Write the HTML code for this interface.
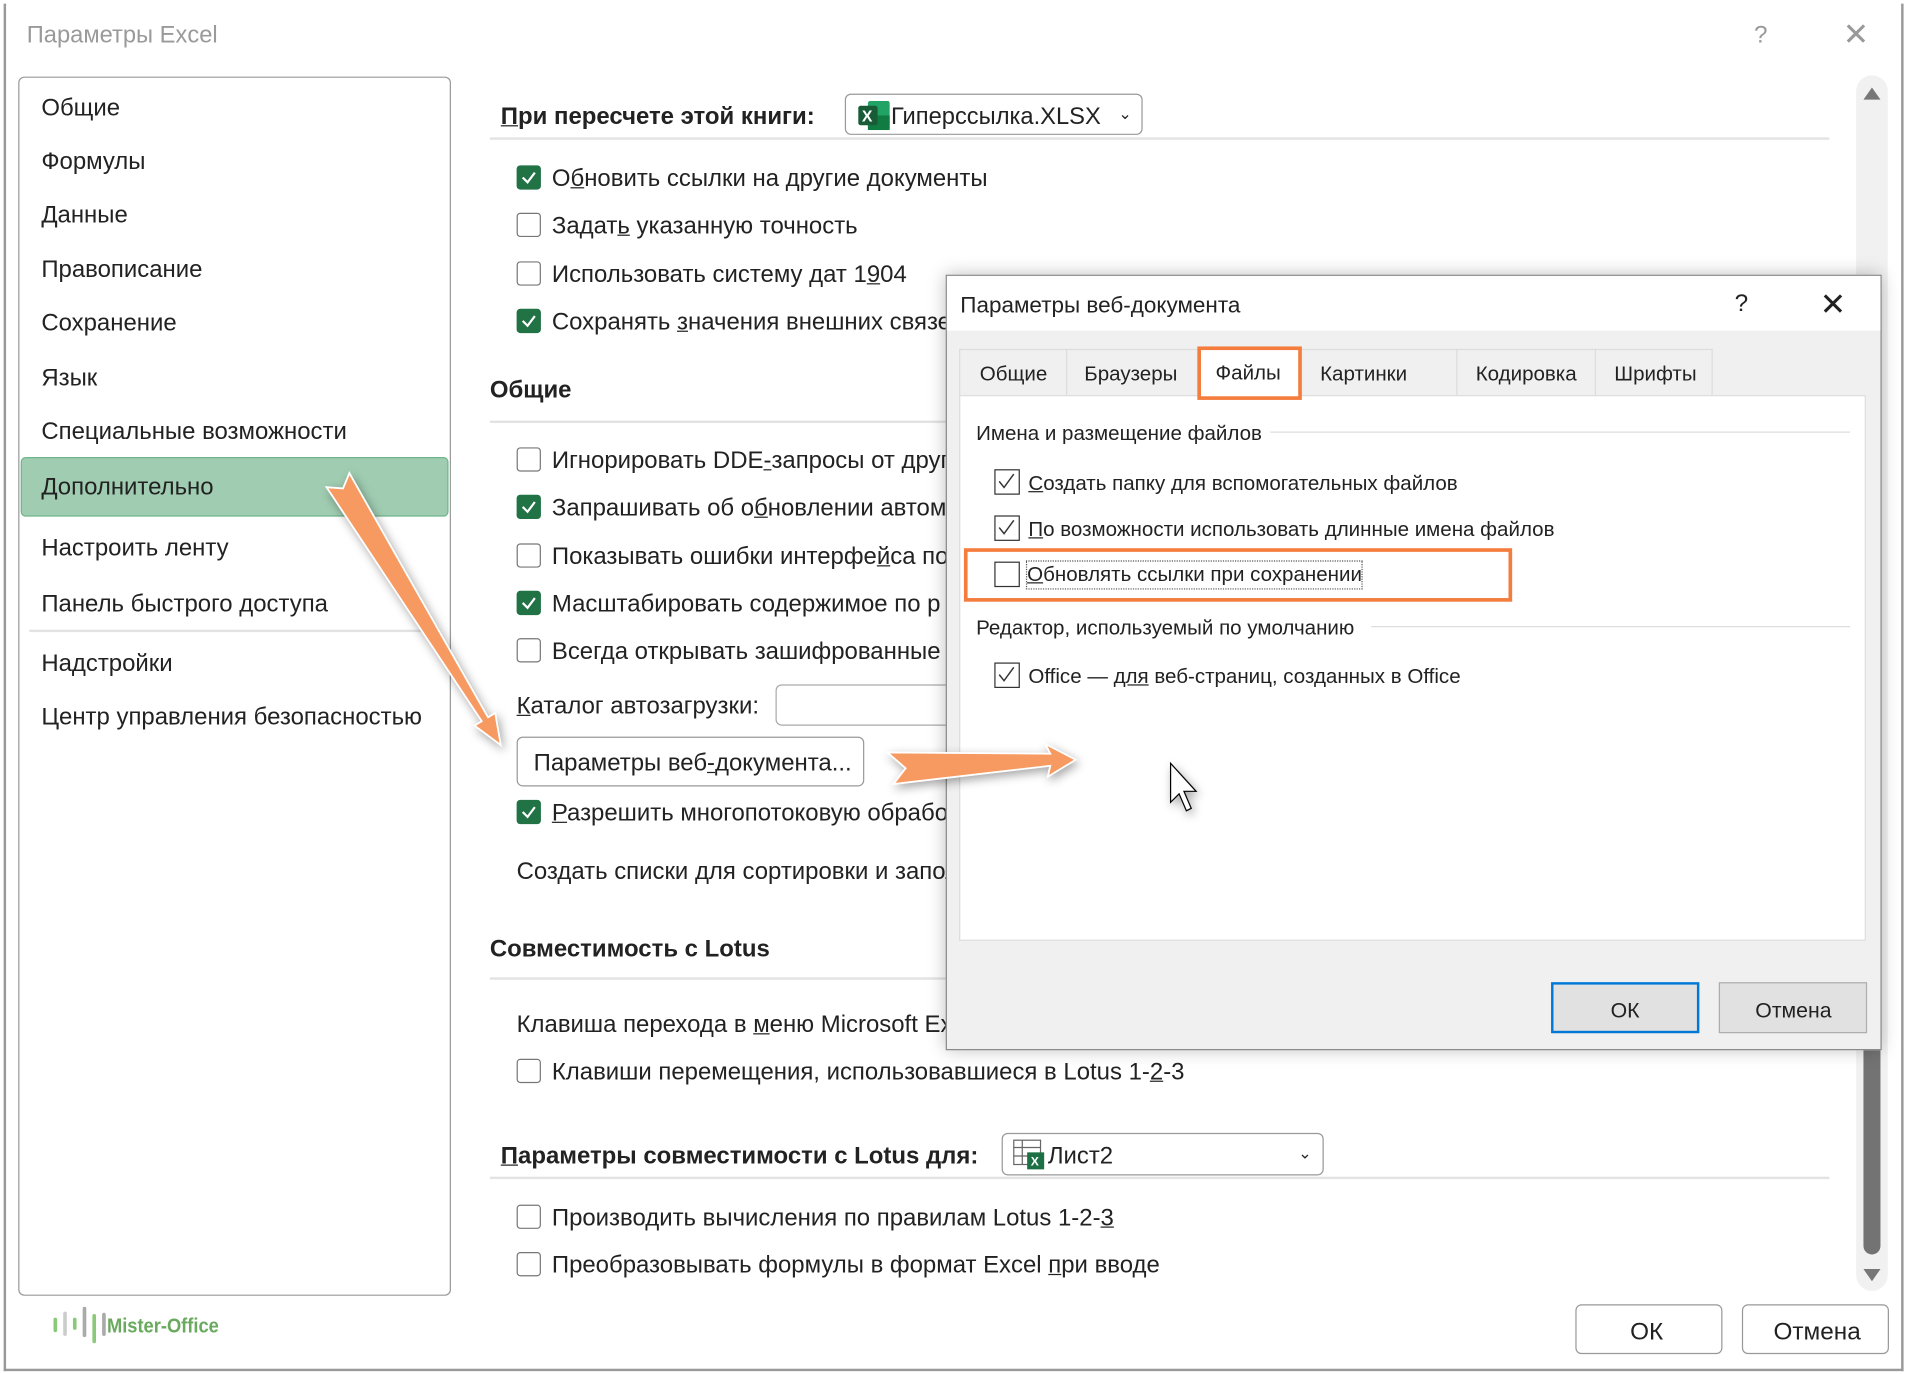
<!DOCTYPE html>
<html><head><meta charset="utf-8"><style>
*{box-sizing:border-box;margin:0;padding:0}
html,body{width:1906px;height:1374px;overflow:hidden;background:#fff}
#s{position:absolute;left:0;top:0;width:1568px;height:1130px;transform:scale(1.21556);transform-origin:0 0;font-family:"Liberation Sans",sans-serif;color:#222;font-size:19.7px}
.a{position:absolute;white-space:nowrap}
.t{position:absolute;white-space:nowrap;line-height:22px;transform:translateY(-10px)}
.d{font-size:16.9px}
.cb{position:absolute;width:20px;height:20px;border:1.5px solid #777;border-radius:3px;background:#fff}
.cg{position:absolute;width:20px;height:20px;border-radius:3px;background:#217346}
.cg svg,.dc svg{position:absolute;left:0;top:0}
.dc{position:absolute;width:21px;height:21px;border:1.5px solid #333;background:#fff}
.b{font-weight:bold}
.line{position:absolute;height:2px;background:#e3e3e3}
u{text-decoration:underline}
.btn{position:absolute;border:1.5px solid #999;border-radius:5px;background:#fff;text-align:center}
</style></head><body><div id="s">
<div class="a" style="left:3px;top:3px;width:1563px;height:1125px;border:2px solid #999;border-top:none"></div>
<div class="t" style="left:22px;top:28px;color:#9a9a9a;font-size:19.5px">Параметры Excel</div>
<div class="t" style="left:1443px;top:28px;color:#999;font-size:20px">?</div>
<div class="t" style="left:1516px;top:27px;color:#999;font-size:26px">✕</div>

<div class="a" style="left:15px;top:63px;width:356px;height:1003px;border:1.5px solid #999;border-radius:5px"></div>
<div class="t" style="left:34px;top:88px">Общие</div>
<div class="t" style="left:34px;top:132px">Формулы</div>
<div class="t" style="left:34px;top:176px">Данные</div>
<div class="t" style="left:34px;top:221px">Правописание</div>
<div class="t" style="left:34px;top:265px">Сохранение</div>
<div class="t" style="left:34px;top:310px">Язык</div>
<div class="t" style="left:34px;top:354px">Специальные возможности</div>
<div class="a" style="left:17px;top:376px;width:352px;height:49px;background:#a0cdb2;border:1.5px solid #6db58a;border-radius:4px"></div>
<div class="t" style="left:34px;top:400px">Дополнительно</div>
<div class="t" style="left:34px;top:450px">Настроить ленту</div>
<div class="t" style="left:34px;top:496px">Панель быстрого доступа</div>
<div class="line" style="left:24px;top:518px;width:336px"></div>
<div class="t" style="left:34px;top:545px">Надстройки</div>
<div class="t" style="left:34px;top:589px">Центр управления безопасностью</div>

<svg class="a" style="left:40px;top:1072px" width="150" height="36">
<rect x="4" y="12" width="3" height="12" rx="1.5" fill="#8bc97a"/><rect x="12" y="7" width="3" height="20" rx="1.5" fill="#ccc"/><rect x="20" y="12" width="3" height="10" rx="1.5" fill="#8bc97a"/><rect x="28" y="3" width="3" height="25" rx="1.5" fill="#aaa"/><rect x="36" y="9" width="3" height="24" rx="1.5" fill="#8bc97a"/><rect x="44" y="8" width="3" height="19" rx="1.5" fill="#aaa"/>
<text x="48" y="24" font-family="Liberation Sans Narrow,Liberation Sans,sans-serif" font-weight="bold" font-size="17" fill="#6aaa5e" textLength="92" lengthAdjust="spacingAndGlyphs">Mister-Office</text></svg>

<!-- right content -->
<div class="t b" style="left:412px;top:95px"><u>П</u>ри пересчете этой книги:</div>
<div class="a" style="left:695px;top:77px;width:245px;height:34px;border:1.5px solid #999;border-radius:5px"></div>
<svg class="a" style="left:706px;top:83px" width="26" height="24"><rect x="8" y="0" width="18" height="24" rx="2" fill="#21a366"/><rect x="8" y="12" width="18" height="12" fill="#107c41"/><rect x="0" y="4" width="16" height="16" rx="2" fill="#185c37"/><text x="3" y="17" font-size="13" font-weight="bold" fill="#fff" font-family="Liberation Sans">X</text></svg>
<div class="t" style="left:733px;top:95px;font-size:19.5px">Гиперссылка.XLSX</div>
<div class="t" style="left:920px;top:93px;font-size:13px">⌄</div>
<div class="line" style="left:403px;top:113px;width:1102px"></div>

<div class="cg" style="left:425px;top:136px"><svg width="20" height="20"><polyline points="5,10 9,14 15,6" fill="none" stroke="#fff" stroke-width="1.8"/></svg></div>
<div class="t" style="left:454px;top:146px">О<u>б</u>новить ссылки на другие документы</div>
<div class="cb" style="left:425px;top:175px"></div>
<div class="t" style="left:454px;top:185px">Задат<u>ь</u> указанную точность</div>
<div class="cb" style="left:425px;top:215px"></div>
<div class="t" style="left:454px;top:225px">Использовать систему дат 1<u>9</u>04</div>
<div class="cg" style="left:425px;top:254px"><svg width="20" height="20"><polyline points="5,10 9,14 15,6" fill="none" stroke="#fff" stroke-width="1.8"/></svg></div>
<div class="t" style="left:454px;top:264px">Сохранять <u>з</u>начения внешних связей</div>

<div class="t b" style="left:403px;top:320px">Общие</div>
<div class="line" style="left:403px;top:346px;width:400px"></div>
<div class="cb" style="left:425px;top:368px"></div>
<div class="t" style="left:454px;top:378px">Игнорировать DDE<u>-</u>запросы от других</div>
<div class="cg" style="left:425px;top:407px"><svg width="20" height="20"><polyline points="5,10 9,14 15,6" fill="none" stroke="#fff" stroke-width="1.8"/></svg></div>
<div class="t" style="left:454px;top:417px">Запрашивать об о<u>б</u>новлении автоматических</div>
<div class="cb" style="left:425px;top:447px"></div>
<div class="t" style="left:454px;top:457px">Показывать ошибки интерфе<u>й</u>са по</div>
<div class="cg" style="left:425px;top:486px"><svg width="20" height="20"><polyline points="5,10 9,14 15,6" fill="none" stroke="#fff" stroke-width="1.8"/></svg></div>
<div class="t" style="left:454px;top:496px">Масштабировать содержимое по р</div>
<div class="cb" style="left:425px;top:525px"></div>
<div class="t" style="left:454px;top:535px">Всегда открывать зашифрованные</div>
<div class="t" style="left:425px;top:580px"><u>К</u>аталог автозагрузки:</div>
<div class="a" style="left:638px;top:563px;width:200px;height:34px;border:1.5px solid #aaa;border-radius:5px"></div>
<div class="btn" style="left:425px;top:606px;width:286px;height:41px"></div>
<div class="t" style="left:439px;top:627px">Параметры веб<u>-</u>документа...</div>
<div class="cg" style="left:425px;top:658px"><svg width="20" height="20"><polyline points="5,10 9,14 15,6" fill="none" stroke="#fff" stroke-width="1.8"/></svg></div>
<div class="t" style="left:454px;top:668px"><u>Р</u>азрешить многопотоковую обработку</div>
<div class="t" style="left:425px;top:716px">Создать списки для сортировки и заполнения</div>

<div class="t b" style="left:403px;top:780px">Совместимость с Lotus</div>
<div class="line" style="left:403px;top:804px;width:400px"></div>
<div class="t" style="left:425px;top:842px">Клавиша перехода в <u>м</u>еню Microsoft Excel</div>
<div class="cb" style="left:425px;top:871px"></div>
<div class="t" style="left:454px;top:881px">Клавиши перемещения, использовавшиеся в Lotus 1-<u>2</u>-3</div>

<div class="t b" style="left:412px;top:950px"><u>П</u>араметры совместимости с Lotus для:</div>
<div class="a" style="left:824px;top:932px;width:265px;height:35px;border:1.5px solid #999;border-radius:5px"></div>
<svg class="a" style="left:833px;top:937px" width="28" height="26"><rect x="1" y="1" width="22" height="20" fill="#fff" stroke="#666"/><line x1="1" y1="7" x2="23" y2="7" stroke="#666"/><line x1="8" y1="1" x2="8" y2="21" stroke="#666"/><line x1="1" y1="14" x2="23" y2="14" stroke="#666"/><rect x="12" y="11" width="14" height="14" fill="#1d7044"/><text x="15" y="22" font-size="10" font-weight="bold" fill="#fff" font-family="Liberation Sans">X</text></svg>
<div class="t" style="left:862px;top:950px">Лист2</div>
<div class="t" style="left:1068px;top:948px;font-size:13px">⌄</div>
<div class="line" style="left:403px;top:968px;width:1102px"></div>
<div class="cb" style="left:425px;top:991px"></div>
<div class="t" style="left:454px;top:1001px">Производить вычисления по правилам Lotus 1-2-<u>3</u></div>
<div class="cb" style="left:425px;top:1030px"></div>
<div class="t" style="left:454px;top:1040px">Преобразовывать формулы в формат Excel <u>п</u>ри вводе</div>

<!-- scrollbar -->
<div class="a" style="left:1527px;top:62px;width:26px;height:1000px;background:#f1f1f1;border-radius:13px"></div>
<svg class="a" style="left:1531px;top:70px" width="18" height="14"><polygon points="2,12 9,2 16,12" fill="#777"/></svg>
<div class="a" style="left:1533px;top:700px;width:14px;height:332px;background:#737373;border-radius:7px"></div>
<svg class="a" style="left:1531px;top:1042px" width="18" height="14"><polygon points="2,2 16,2 9,12" fill="#777"/></svg>

<div class="btn" style="left:1296px;top:1073px;width:121px;height:41px"></div>
<div class="t" style="left:1341px;top:1095px;font-size:20px">ОК</div>
<div class="btn" style="left:1433px;top:1073px;width:121px;height:41px"></div>
<div class="t" style="left:1459px;top:1095px;font-size:20px">Отмена</div>

<!-- dialog -->
<div class="a" style="left:778px;top:226px;width:770px;height:638px;background:#f0f0f0;border:1px solid #888;box-shadow:0 0 14px rgba(0,0,0,.25)"></div>
<div class="a" style="left:779px;top:227px;width:768px;height:45px;background:#fff"></div>
<div class="t" style="left:790px;top:250px;font-size:18.5px">Параметры веб-документа</div>
<div class="t" style="left:1427px;top:249px;font-size:20px">?</div>
<div class="t" style="left:1497px;top:249px;font-size:26px">✕</div>
<div class="a" style="left:789px;top:287px;width:620px;height:38px;border:1px solid #dcdcdc;border-bottom:none"></div>
<div class="a" style="left:877px;top:287px;width:1px;height:38px;background:#dcdcdc"></div>
<div class="a" style="left:1198px;top:287px;width:1px;height:38px;background:#dcdcdc"></div>
<div class="a" style="left:1312px;top:287px;width:1px;height:38px;background:#dcdcdc"></div>
<div class="t d" style="left:806px;top:307px">Общие</div>
<div class="t d" style="left:892px;top:307px">Браузеры</div>
<div class="t d" style="left:1086px;top:307px">Картинки</div>
<div class="t d" style="left:1214px;top:307px">Кодировка</div>
<div class="t d" style="left:1328px;top:307px">Шрифты</div>
<div class="a" style="left:789px;top:325px;width:746px;height:449px;background:#fff;border:1px solid #dcdcdc"></div>
<div class="a" style="left:985px;top:285px;width:86px;height:44px;background:#fff;border:3px solid #f47c3c"></div>
<div class="t d" style="left:1000px;top:306px">Файлы</div>
<div class="t d" style="left:803px;top:356px">Имена и размещение файлов</div>
<div class="a" style="left:1045px;top:355px;width:477px;height:1px;background:#ddd"></div>
<div class="dc" style="left:818px;top:386px"><svg width="18" height="18"><polyline points="3,9 7,14 15,3" fill="none" stroke="#333" stroke-width="1.2"/></svg></div>
<div class="t d" style="left:846px;top:397px"><u>С</u>оздать папку для вспомогательных файлов</div>
<div class="dc" style="left:818px;top:424px"><svg width="18" height="18"><polyline points="3,9 7,14 15,3" fill="none" stroke="#333" stroke-width="1.2"/></svg></div>
<div class="t d" style="left:846px;top:435px"><u>П</u>о возможности использовать длинные имена файлов</div>
<div class="dc" style="left:818px;top:462px"></div>
<div class="t d" style="left:845px;top:472px;outline:1px dotted #555"><u>О</u>бновлять ссылки при сохранении</div>
<div class="a" style="left:793px;top:451px;width:451px;height:44px;border:3px solid #f47c3c"></div>
<div class="t d" style="left:803px;top:516px">Редактор, используемый по умолчанию</div>
<div class="a" style="left:1128px;top:515px;width:394px;height:1px;background:#ddd"></div>
<div class="dc" style="left:818px;top:545px"><svg width="18" height="18"><polyline points="3,9 7,14 15,3" fill="none" stroke="#333" stroke-width="1.2"/></svg></div>
<div class="t d" style="left:846px;top:556px">Office — <u>для</u> веб-страниц, созданных в Office</div>
<div class="a" style="left:1276px;top:808px;width:122px;height:42px;background:#e1e1e1;border:2px solid #0078d7"></div>
<div class="t" style="left:1325px;top:830px;font-size:17.5px">ОК</div>
<div class="a" style="left:1414px;top:808px;width:122px;height:42px;background:#e1e1e1;border:1px solid #adadad"></div>
<div class="t" style="left:1444px;top:830px;font-size:17.5px">Отмена</div>

<svg class="a" style="left:0;top:0;filter:drop-shadow(2px 3px 4px rgba(0,0,0,.35))" width="1568" height="1130">
<polygon points="287.4,389.2 401.5,590.1 407.4,586.5 412,613 390.4,596.9 396.3,593.3 268.6,400.8 282.2,401.8" fill="#f79a62" stroke="#fff" stroke-width="1.5"/>
<polygon points="730,619 864,620 860,612 885,625 862,639 864,630 735,645 745,632" fill="#f79a62" stroke="#fff" stroke-width="1.5"/>
<polygon points="963,628 963,660 970,653 976,667 980,665 974,651 984,651" fill="#fff" stroke="#000" stroke-width="1"/>
</svg>
</div></body></html>
